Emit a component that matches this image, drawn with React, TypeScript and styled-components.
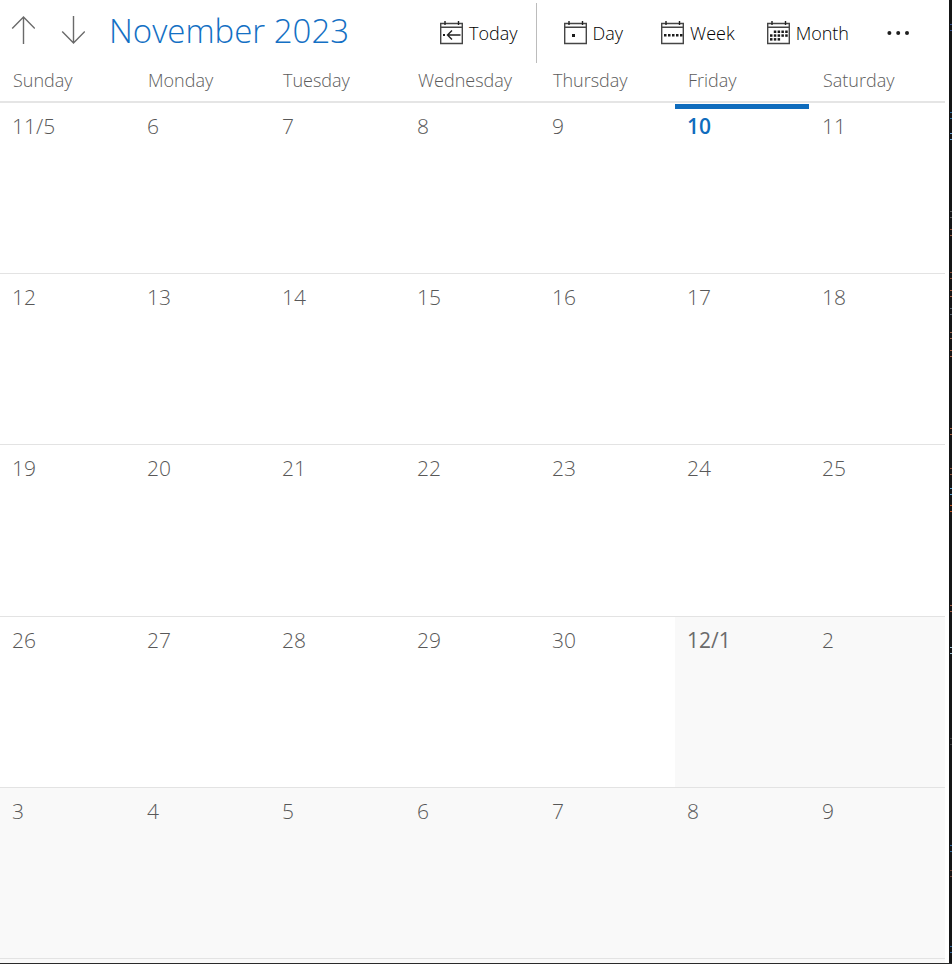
import React from "react";
import styled, { createGlobalStyle, css } from "styled-components";

const GlobalStyle = createGlobalStyle`
  * { box-sizing: border-box; }
  body {
    margin: 0;
    background: #ffffff;
    font-family: "Open Sans", "Noto Sans", sans-serif;
  }
`;

const Desktop = styled.div`
  display: flex;
  min-height: 100vh;
  background: #151617;
  border-bottom: 1px solid #2a2a2a;
`;

const CalendarWindow = styled.main`
  flex: 1;
  min-width: 0;
  display: flex;
  flex-direction: column;
  padding-right: 4px;
  background: #ffffff;
`;

const BackdropEdge = styled.div`
  flex: none;
  width: 3px;
  overflow: hidden;

  svg {
    display: block;
  }
`;

const Header = styled.header`
  display: flex;
  align-items: flex-start;
  height: 63px;
  padding: 3px 24px 0 6px;
`;

const ArrowButton = styled.button`
  display: flex;
  align-items: center;
  justify-content: center;
  width: 34px;
  height: 54px;
  margin-right: 16px;
  padding: 0;
  border: 0;
  background: none;
  color: #6a6a6a;
`;

const Title = styled.h1`
  flex: 1;
  margin: 0 0 0 3px;
  color: #1470c4;
  font-size: 33px;
  font-weight: 300;
  line-height: 56px;
  white-space: nowrap;
`;

const Tools = styled.div`
  display: flex;
  align-items: stretch;
  height: 60px;
`;

const ToolButton = styled.button<{ $space: number }>`
  display: flex;
  align-items: center;
  gap: 6px;
  margin: 0 ${(p) => p.$space}px 0 0;
  padding: 0;
  border: 0;
  background: none;
  color: #000000;
  font-family: inherit;
  font-size: 18px;
  font-weight: 350;
  line-height: 24px;
  white-space: nowrap;
`;

const Divider = styled.div`
  width: 1px;
  margin-right: 27px;
  background: #bcbcbc;
`;

const MonthTable = styled.table`
  flex: 1;
  display: flex;
  flex-direction: column;
  background: #ffffff;
`;

const HeadGroup = styled.thead`
  display: block;
  border-bottom: 2px solid #e5e5e5;
`;

const Weeks = styled.tbody`
  flex: 1;
  display: grid;
  grid-auto-rows: 1fr;
`;

const WeekRow = styled.tr`
  display: grid;
  grid-template-columns: repeat(7, 1fr);
`;

const Weekday = styled.th`
  height: 38px;
  padding: 0 0 0 13px;
  color: #5c5c5c;
  font-size: 18px;
  font-weight: 350;
  line-height: 35px;
  text-align: left;
`;

const DayCell = styled.td<{ $today: boolean; $outside: boolean; $strong: boolean }>`
  padding: 8px 0 0 12px;
  border-bottom: 1px solid #e3e3e3;
  background: ${(p) => (p.$outside ? "#f9f9f9" : "#ffffff")};
  color: ${(p) => (p.$strong ? "#6b6b6b" : "#585858")};
  font-size: 21px;
  font-weight: ${(p) => (p.$strong ? 400 : 350)};
  line-height: 30px;
  ${(p) =>
    p.$today &&
    css`
      background: linear-gradient(#0f6cbd, #0f6cbd) 0 1px / calc(100% - 1px) 5px no-repeat;
      color: #0f6cbd;
      font-weight: 600;
    `}
`;

const BottomStrip = styled.div`
  height: 4px;
  background: #f9f9f9;
`;

const weekdays = ["Sunday", "Monday", "Tuesday", "Wednesday", "Thursday", "Friday", "Saturday"];

const weeks = [
  ["11/5", "6", "7", "8", "9", "10", "11"],
  ["12", "13", "14", "15", "16", "17", "18"],
  ["19", "20", "21", "22", "23", "24", "25"],
  ["26", "27", "28", "29", "30", "12/1", "2"],
  ["3", "4", "5", "6", "7", "8", "9"],
];

const TODAY_INDEX = 5;
const NEXT_MONTH_INDEX = 26;

function Arrow({ down = false }: { down?: boolean }) {
  return (
    <svg width="24" height="28" viewBox="0 0 24 28" fill="none" stroke="currentColor" strokeWidth="1.4" aria-hidden="true">
      <path d={down ? "M12.5 0V27M1.2 15.5 12.5 27 23.8 15.5" : "M12.5 28V1M1.2 12.5 12.5 1 23.8 12.5"} />
    </svg>
  );
}

type View = "today" | "day" | "week" | "month";

const squares: Record<View, number[][]> = {
  today: [[3, 13]],
  day: [[8, 13]],
  week: [[3, 13], [7, 13], [11, 13], [15, 13], [19, 13]],
  month: [
    [6.8, 9.5], [10.6, 9.5], [14.4, 9.5], [18.2, 9.5],
    [3, 13.3], [6.8, 13.3], [10.6, 13.3], [14.4, 13.3], [18.2, 13.3],
    [3, 17.1], [6.8, 17.1], [10.6, 17.1],
  ],
};

const squareSize: Record<View, number> = { today: 2, day: 3, week: 2.5, month: 2.5 };

function CalendarIcon({ view }: { view: View }) {
  const size = squareSize[view];
  return (
    <svg width="23" height="24" viewBox="0 0 23 24" fill="none" aria-hidden="true">
      <path d="M.7 2.5H22.3V22.5H.7ZM.7 6.3H22.3" stroke="#454545" strokeWidth="1.4" />
      <path d="M5 0V4M18.5 0V4" stroke="#222222" strokeWidth="1.4" />
      {squares[view].map(([x, y]) => (
        <rect key={`${x}-${y}`} x={x} y={y} width={size} height={size} fill="#1b1b1b" />
      ))}
      {view === "today" && <path d="M20.5 14H7.5M12 9.5 7.5 14 12 18.5" stroke="#222222" strokeWidth="1.4" />}
    </svg>
  );
}

const flecks: [number, string][] = [
  [24, "#34508c"], [112, "#2f6d9c"], [133, "#6fa6d8"], [211, "#5a5a5a"], [229, "#96583e"],
  [272, "#8a5039"], [290, "#a35c42"], [308, "#56636e"], [332, "#97634c"], [350, "#a35c42"],
  [428, "#a8623f"], [468, "#8d5238"], [488, "#57a1cf"], [505, "#c2521d"], [605, "#a35c42"],
  [647, "#9cc0d0"], [738, "#3c3c3c"], [845, "#32669a"], [870, "#6b4033"], [946, "#32669a"],
];

function Flecks() {
  return (
    <svg width="3" height="960" viewBox="0 0 3 960" aria-hidden="true">
      {flecks.map(([y, color]) => (
        <path key={y} d={`M3 ${y + 0.5}H1M3 ${y + 6.5}H1`} stroke={color} />
      ))}
    </svg>
  );
}

export default function App() {
  return (
    <>
      <GlobalStyle />
      <Desktop>
        <CalendarWindow>
          <Header>
            <ArrowButton aria-label="Previous month"><Arrow /></ArrowButton>
            <ArrowButton aria-label="Next month"><Arrow down /></ArrowButton>
            <Title>November 2023</Title>
            <Tools>
              <ToolButton $space={18}><CalendarIcon view="today" />Today</ToolButton>
              <Divider />
              <ToolButton $space={38}><CalendarIcon view="day" />Day</ToolButton>
              <ToolButton $space={32}><CalendarIcon view="week" />Week</ToolButton>
              <ToolButton $space={38}><CalendarIcon view="month" />Month</ToolButton>
              <ToolButton $space={11} aria-label="More options">
                <svg width="23" height="6" viewBox="0 0 23 6" fill="#1f1f1f" aria-hidden="true">
                  <circle cx="2.4" cy="3" r="2" />
                  <circle cx="11.2" cy="3" r="2" />
                  <circle cx="20" cy="3" r="2" />
                </svg>
              </ToolButton>
            </Tools>
          </Header>
          <MonthTable>
            <HeadGroup>
              <WeekRow>
                {weekdays.map((name) => <Weekday key={name} scope="col">{name}</Weekday>)}
              </WeekRow>
            </HeadGroup>
            <Weeks>
              {weeks.map((days, row) => (
                <WeekRow key={row}>
                  {days.map((label, col) => {
                    const index = row * 7 + col;
                    return (
                      <DayCell
                        key={index}
                        $today={index === TODAY_INDEX}
                        $outside={index >= NEXT_MONTH_INDEX}
                        $strong={index === NEXT_MONTH_INDEX}
                      >
                        {label}
                      </DayCell>
                    );
                  })}
                </WeekRow>
              ))}
            </Weeks>
          </MonthTable>
          <BottomStrip />
        </CalendarWindow>
        <BackdropEdge><Flecks /></BackdropEdge>
      </Desktop>
    </>
  );
}
